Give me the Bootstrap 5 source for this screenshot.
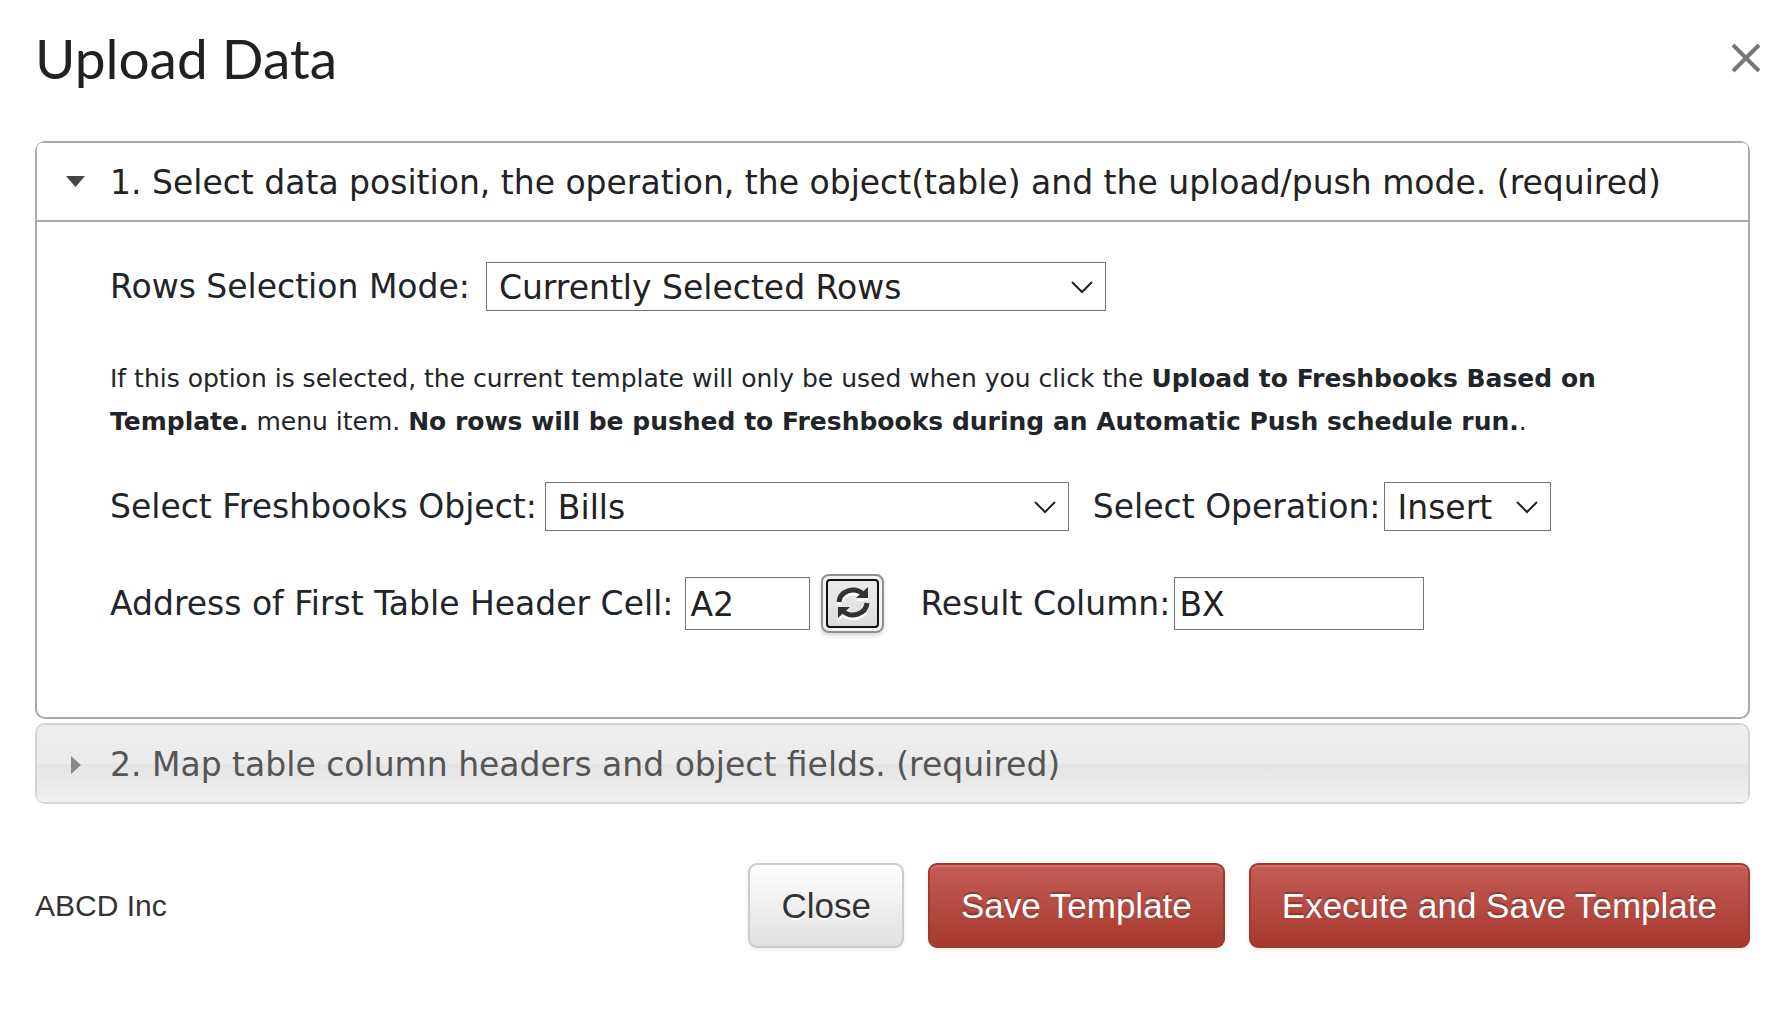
<!DOCTYPE html>
<html lang="en">
<head>
<meta charset="utf-8">
<meta name="viewport" content="width=device-width, initial-scale=1">
<title>Upload Data</title>
<link href="https://cdn.jsdelivr.net/npm/bootstrap@5.3.0/dist/css/bootstrap.min.css" rel="stylesheet">
<style>
  body { background: #fff; color: #222; font-family: "DejaVu Sans", Verdana, sans-serif; font-size: 33px; line-height: 40px; font-variant-ligatures: none; }
  .dialog { padding: 22px 39px 40px 35px; }
  .dialog-title { font-family: Lato, sans-serif; font-size: 55px; line-height: 72px; color: #202124; font-weight: 400; }
  .dialog-head { margin-bottom: 47px; }
  .dialog-close { width: 48px; height: 48px; margin: 11px -20px 0 0; color: #777; }

  .steps .accordion-item, .steps .accordion-item:not(:first-of-type) { border: 2px solid #aaa; border-radius: 10px; }
  .steps .accordion-item.closed { border-color: #d3d3d3; }
  .steps .accordion-button { font-size: 33px; line-height: 40px; padding: 20px 24px 17px; color: #222; background: #fff; border-radius: 8px 8px 0 0; box-shadow: none; border-bottom: 2px solid #aaa; }
  .steps .accordion-button::after { display: none; }
  .steps .accordion-button.collapsed { color: #555; border-bottom: 0; border-radius: 8px; background: linear-gradient(#ededed 0, #ebebeb 50%, #e4e4e4 51%, #f1f1f1 100%); }
  .steps .step-icon { width: 32px; height: 32px; margin-right: 17px; flex: none; }
  .steps .accordion-body { padding: 40px 73px 84px; }

  .control-row { margin-bottom: 43px; }
  .field-select, .field-input { width: auto; font-size: 33px; line-height: 40px; color: #222; border: 1px solid #767676; border-radius: 0; background-color: #fff; }
  .field-select { height: 49px; padding: 5px 48px 2px 12px; background-image: url("data:image/svg+xml,%3Csvg xmlns='http://www.w3.org/2000/svg' viewBox='0 0 24 14'%3E%3Cpath d='M2 2l10 10L22 2' fill='none' stroke='%23222' stroke-width='2'/%3E%3C/svg%3E"); background-position: right 11px center; background-size: 24px 14px; }
  .field-input { height: 53px; padding: 6px 4px 5px; }
  .w-mode { width: 620px; } .w-object { width: 524px; } .w-operation { width: 167px; }
  .w-cell { width: 125px; } .w-result { width: 250px; }
  .note { font-size: 25px; line-height: 43px; margin: -2px 0 39px; }
  .refresh-btn { width: 63px; height: 59px; margin: 0 36px 0 11px; padding: 3px; border: 2px solid #919191; border-radius: 8px; background: #f3f3f3; box-shadow: 0 3px 4px rgba(0,0,0,.15); }
  .refresh-face { border: 2px solid #101010; border-radius: 4px; background: linear-gradient(#ebebeb, #dcdcdc); }

  .dialog-foot { margin-top: 59px; gap: 24px; font-family: "Liberation Sans", Arial, sans-serif; }
  .company { font-size: 30px; line-height: 40px; color: #333; }
  .action-btn { font-family: inherit; font-size: 35px; line-height: 40px; padding: 21px 31px 20px; border-width: 2px; border-radius: 9px; }
  .action-plain { color: #333; border-color: #ccc; background: linear-gradient(#fff, #e0e0e0); text-shadow: 0 2px 1px #fff; box-shadow: 0 2px 4px rgba(0,0,0,.08); }
  .action-red { color: #fff; border-color: #a4382f; background: linear-gradient(#c35d55, #a7392e); text-shadow: 0 -2px 1px rgba(0,0,0,.25); box-shadow: inset 0 2px 0 rgba(255,255,255,.15), 0 2px 4px rgba(0,0,0,.08); }
</style>
<script src="https://cdn.jsdelivr.net/npm/bootstrap@5.3.0/dist/js/bootstrap.bundle.min.js"></script>
</head>
<body>
<main class="dialog">
  <header class="dialog-head d-flex justify-content-between align-items-start">
    <h1 class="dialog-title mb-0">Upload Data</h1>
    <button type="button" class="dialog-close btn p-0 border-0 d-flex" aria-label="Close dialog">
      <svg width="48" height="48" viewBox="0 0 48 48" fill="none" stroke="currentColor" stroke-width="4"><path d="M11 12L37 38M37 12L11 38"/></svg>
    </button>
  </header>

  <div class="accordion steps d-flex flex-column" id="steps">
    <section class="accordion-item mb-1">
      <h2 class="accordion-header">
        <button class="accordion-button" type="button" data-bs-toggle="collapse" data-bs-target="#step1" aria-expanded="true" aria-controls="step1">
          <svg class="step-icon" viewBox="0 0 32 32" aria-hidden="true"><path d="M5 9h19l-9.500 11z" fill="#444"/></svg>
          <span>1. Select data position, the operation, the object(table) and the upload/push mode. (required)</span>
        </button>
      </h2>
      <div id="step1" class="accordion-collapse collapse show">
        <div class="accordion-body">
          <div class="d-flex align-items-center mb-5">
            <label for="mode" class="me-3">Rows Selection Mode:</label>
            <select id="mode" class="form-select field-select w-mode"><option>Currently Selected Rows</option></select>
          </div>
          <p class="note">If this option is selected, the current template will only be used when you click the <strong>Upload to Freshbooks Based on Template.</strong> menu item. <strong>No rows will be pushed to Freshbooks during an Automatic Push schedule run.</strong>.</p>
          <div class="control-row d-flex align-items-center">
            <label for="object" class="me-2">Select Freshbooks Object:</label>
            <select id="object" class="form-select field-select w-object me-4"><option>Bills</option></select>
            <label for="operation" class="me-1">Select Operation:</label>
            <select id="operation" class="form-select field-select w-operation"><option>Insert</option></select>
          </div>
          <div class="d-flex align-items-center">
            <label for="cell" class="me-2 pe-1">Address of First Table Header Cell:</label>
            <input id="cell" type="text" class="form-control field-input w-cell" value="A2">
            <button type="button" class="btn refresh-btn d-flex" aria-label="Refresh">
              <span class="refresh-face d-flex flex-fill align-self-stretch align-items-center justify-content-center">
                <svg width="36" height="38" viewBox="0 0 36 38" aria-hidden="true">
                  <g fill="none" stroke="#fff" stroke-width="5" transform="translate(0 3)"><path d="M4 17a14 13 0 0 1 24-8M32 18a14 13 0 0 1-24 8"/><path d="M33 2v11H21zM3 33V22h12z" fill="#fff" stroke="none"/></g>
                  <g fill="none" stroke="#333" stroke-width="5"><path d="M4 17a14 13 0 0 1 24-8M32 18a14 13 0 0 1-24 8"/><path d="M33 2v11H21zM3 33V22h12z" fill="#333" stroke="none"/></g>
                </svg>
              </span>
            </button>
            <label for="result" class="me-1">Result Column:</label>
            <input id="result" type="text" class="form-control field-input w-result" value="BX">
          </div>
        </div>
      </div>
    </section>
    <section class="accordion-item closed">
      <h2 class="accordion-header">
        <button class="accordion-button collapsed" type="button" data-bs-toggle="collapse" data-bs-target="#step2" aria-expanded="false" aria-controls="step2">
          <svg class="step-icon" viewBox="0 0 32 32" aria-hidden="true"><path d="M10 7v18l10-9z" fill="#888"/></svg>
          <span>2. Map table column headers and object fields. (required)</span>
        </button>
      </h2>
      <div id="step2" class="accordion-collapse collapse"><div class="accordion-body"></div></div>
    </section>
  </div>

  <footer class="dialog-foot d-flex align-items-center">
    <div class="company me-auto">ABCD Inc</div>
    <button type="button" class="btn action-btn action-plain">Close</button>
    <button type="button" class="btn action-btn action-red">Save Template</button>
    <button type="button" class="btn action-btn action-red">Execute and Save Template</button>
  </footer>
</main>
</body>
</html>
